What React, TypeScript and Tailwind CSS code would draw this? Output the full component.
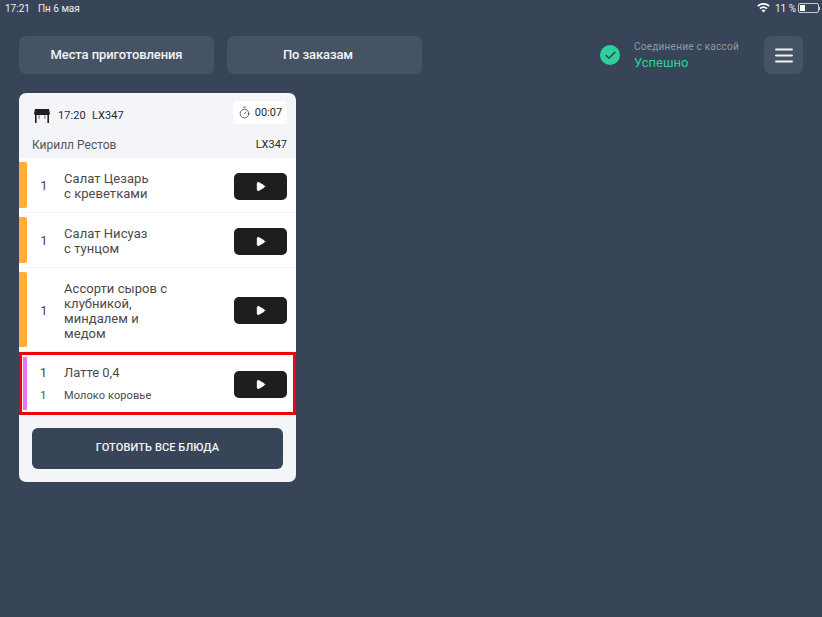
import { Check, Play, Timer } from "lucide-react";

type Dish = {
  lines: string[];
  h: string;
};

const dishes: Dish[] = [
  { lines: ["Салат Цезарь", "с креветками"], h: "h-[55px]" },
  { lines: ["Салат Нисуаз", "с тунцом"], h: "h-[55px]" },
  { lines: ["Ассорти сыров с", "клубникой,", "миндалем и", "медом"], h: "h-[84px]" },
];

function PlayButton() {
  return (
    <div className="mt-[2px] flex h-[27px] w-[53px] shrink-0 items-center justify-center rounded-[5px] bg-[#1d1e20]">
      <Play size={11} className="fill-white text-white" />
    </div>
  );
}

function DishRow({ dish }: { dish: Dish }) {
  return (
    <div className={`flex ${dish.h} items-center border-b border-[#f1f5f8] bg-white py-[4px] pr-[9px]`}>
      <div className="h-full w-[8px] shrink-0 rounded-r-[2px] bg-[#ffad33]" />
      <div className="w-[37px] shrink-0 pr-[3px] pt-[2px] text-center text-[13px] text-[#4a4a4a]">1</div>
      <div className="flex-1 pt-[2px] text-[13px] leading-[15px] tracking-[0.05px] text-[#4a4a4a]">
        {dish.lines.map((line) => (
          <div key={line}>{line}</div>
        ))}
      </div>
      <PlayButton />
    </div>
  );
}

function WifiIcon() {
  return (
    <svg width="13" height="10" viewBox="0 0 13 10" className="fill-white">
      <path d="M6.5 9.6 4.6 7.4a2.8 2.8 0 0 1 3.8 0Z" />
      <path d="M3.6 6.2 2.4 4.9a6 6 0 0 1 8.2 0L9.4 6.2a4.3 4.3 0 0 0-5.8 0Z" />
      <path d="M1.4 3.8.2 2.5a9.2 9.2 0 0 1 12.6 0l-1.2 1.3a7.5 7.5 0 0 0-10.2 0Z" />
    </svg>
  );
}

function TableIcon() {
  return (
    <svg width="16" height="14" viewBox="0 0 16 14" className="fill-[#1d1e20]">
      <path d="M1 0h14l1 5H0Z" />
      <rect x="0.5" y="5" width="15" height="1" />
      <rect x="1" y="6" width="1.6" height="8" />
      <rect x="13.4" y="6" width="1.6" height="8" />
      <rect x="4.6" y="6" width="1" height="4" fillOpacity="0.6" />
      <rect x="10.4" y="6" width="1" height="4" fillOpacity="0.6" />
    </svg>
  );
}

function BurgerIcon() {
  return (
    <svg width="18" height="15" viewBox="0 0 18 15" className="stroke-[#f2f4f6]" strokeWidth="1.8" strokeLinecap="round">
      <path d="M1 1.5h16M1 7.5h16M1 13.5h16" />
    </svg>
  );
}

export default function App() {
  return (
    <div className="h-[617px] w-[822px] overflow-hidden bg-[#384558] font-['Roboto',sans-serif]">
      <div className="flex h-[16px] items-center justify-between pl-[5px] pr-[2px] text-[10px] text-[#eef0f3]">
        <div className="flex gap-[8px]">
          <span>17:21</span>
          <span>Пн 6 мая</span>
        </div>
        <div className="flex items-center gap-[5px]">
          <WifiIcon />
          <div className="flex items-center gap-[2px]">
            <span>11 %</span>
            <div className="flex items-center">
              <div className="h-[10px] w-[21px] rounded-[2px] border border-[#c9ced6] p-[1px]">
                <div className="h-full w-[5px] bg-white" />
              </div>
              <div className="h-[3px] w-[1px] bg-[#c9ced6]" />
            </div>
          </div>
        </div>
      </div>

      <div className="mt-[20px] flex items-center pl-[19px] pr-[19px]">
        <div className="flex h-[38px] w-[195px] items-center justify-center rounded-[7px] bg-[#465365] text-[13px] font-medium tracking-[-0.1px] text-[#f2f4f6]">
          Места приготовления
        </div>
        <div className="ml-[13px] flex h-[38px] w-[195px] items-center justify-center rounded-[7px] bg-[#465365] pr-[13px] text-[13px] font-medium tracking-[-0.1px] text-[#f2f4f6]">
          По заказам
        </div>
        <div className="ml-[178px] flex h-[20px] w-[20px] items-center justify-center rounded-full bg-[#2fd09b]">
          <Check size={13} strokeWidth={3} className="text-[#384558]" />
        </div>
        <div className="ml-[14px] w-[130px] pt-[2px]">
          <div className="text-[10px] leading-[12px] tracking-[0.25px] text-[#8f99a6]">Соединение с кассой</div>
          <div className="mt-[2px] text-[13px] leading-[16px] text-[#2fd09b]">Успешно</div>
        </div>
        <div className="ml-auto flex h-[38px] w-[39px] items-center justify-center rounded-[7px] bg-[#465365]">
          <BurgerIcon />
        </div>
      </div>

      <div className="ml-[19px] mt-[19px] w-[277px] overflow-hidden rounded-[7px] bg-[#f3f5f9]">
        <div className="flex items-start pl-[15px] pr-[9px] pt-[8px]">
          <div className="mt-[8px] flex items-center">
            <TableIcon />
            <span className="ml-[8px] text-[11px] leading-[14px] tracking-[0.1px] text-[#2a2a2a]">17:20</span>
            <span className="ml-[6px] text-[11px] leading-[14px] tracking-[0.1px] text-[#2a2a2a]">LX347</span>
          </div>
          <div className="ml-auto flex h-[23px] w-[54px] items-center justify-center gap-[4px] rounded-[3px] bg-white text-[11px] text-[#2a2a2a]">
            <Timer size={13} strokeWidth={1.3} />
            <span className="pt-[1px]">00:07</span>
          </div>
        </div>
        <div className="flex h-[34px] items-center justify-between pl-[13px] pr-[9px] pt-[8px] text-[12px] text-[#555]">
          <span>Кирилл Рестов</span>
          <span className="text-[11px] text-[#2a2a2a]">LX347</span>
        </div>

        {dishes.map((dish) => (
          <DishRow key={dish.lines[0]} dish={dish} />
        ))}

        <div className="flex h-[63px] items-center border-[3px] border-[#f40008] bg-white py-[2px] pr-[6px]">
          <div className="ml-[1px] h-full w-[4px] shrink-0 rounded-r-[1px] bg-[#ee70f5]" />
          <div className="flex-1 text-[#4a4a4a]">
            <div className="flex items-center text-[13px] leading-[16px]">
              <span className="w-[37px] pr-[4px] text-center">1</span>
              <span>Латте 0,4</span>
            </div>
            <div className="mt-[8px] flex items-center text-[11px] leading-[14px] tracking-[0.1px]">
              <span className="w-[37px] pr-[4px] text-center">1</span>
              <span>Молоко коровье</span>
            </div>
          </div>
          <PlayButton />
        </div>

        <div className="px-[13px] pb-[13px] pt-[13px]">
          <div className="flex h-[41px] items-center justify-center rounded-[6px] bg-[#384558] text-[11px] font-medium tracking-[0.1px] text-[#f2f4f6]">
            ГОТОВИТЬ ВСЕ БЛЮДА
          </div>
        </div>
      </div>
    </div>
  );
}
